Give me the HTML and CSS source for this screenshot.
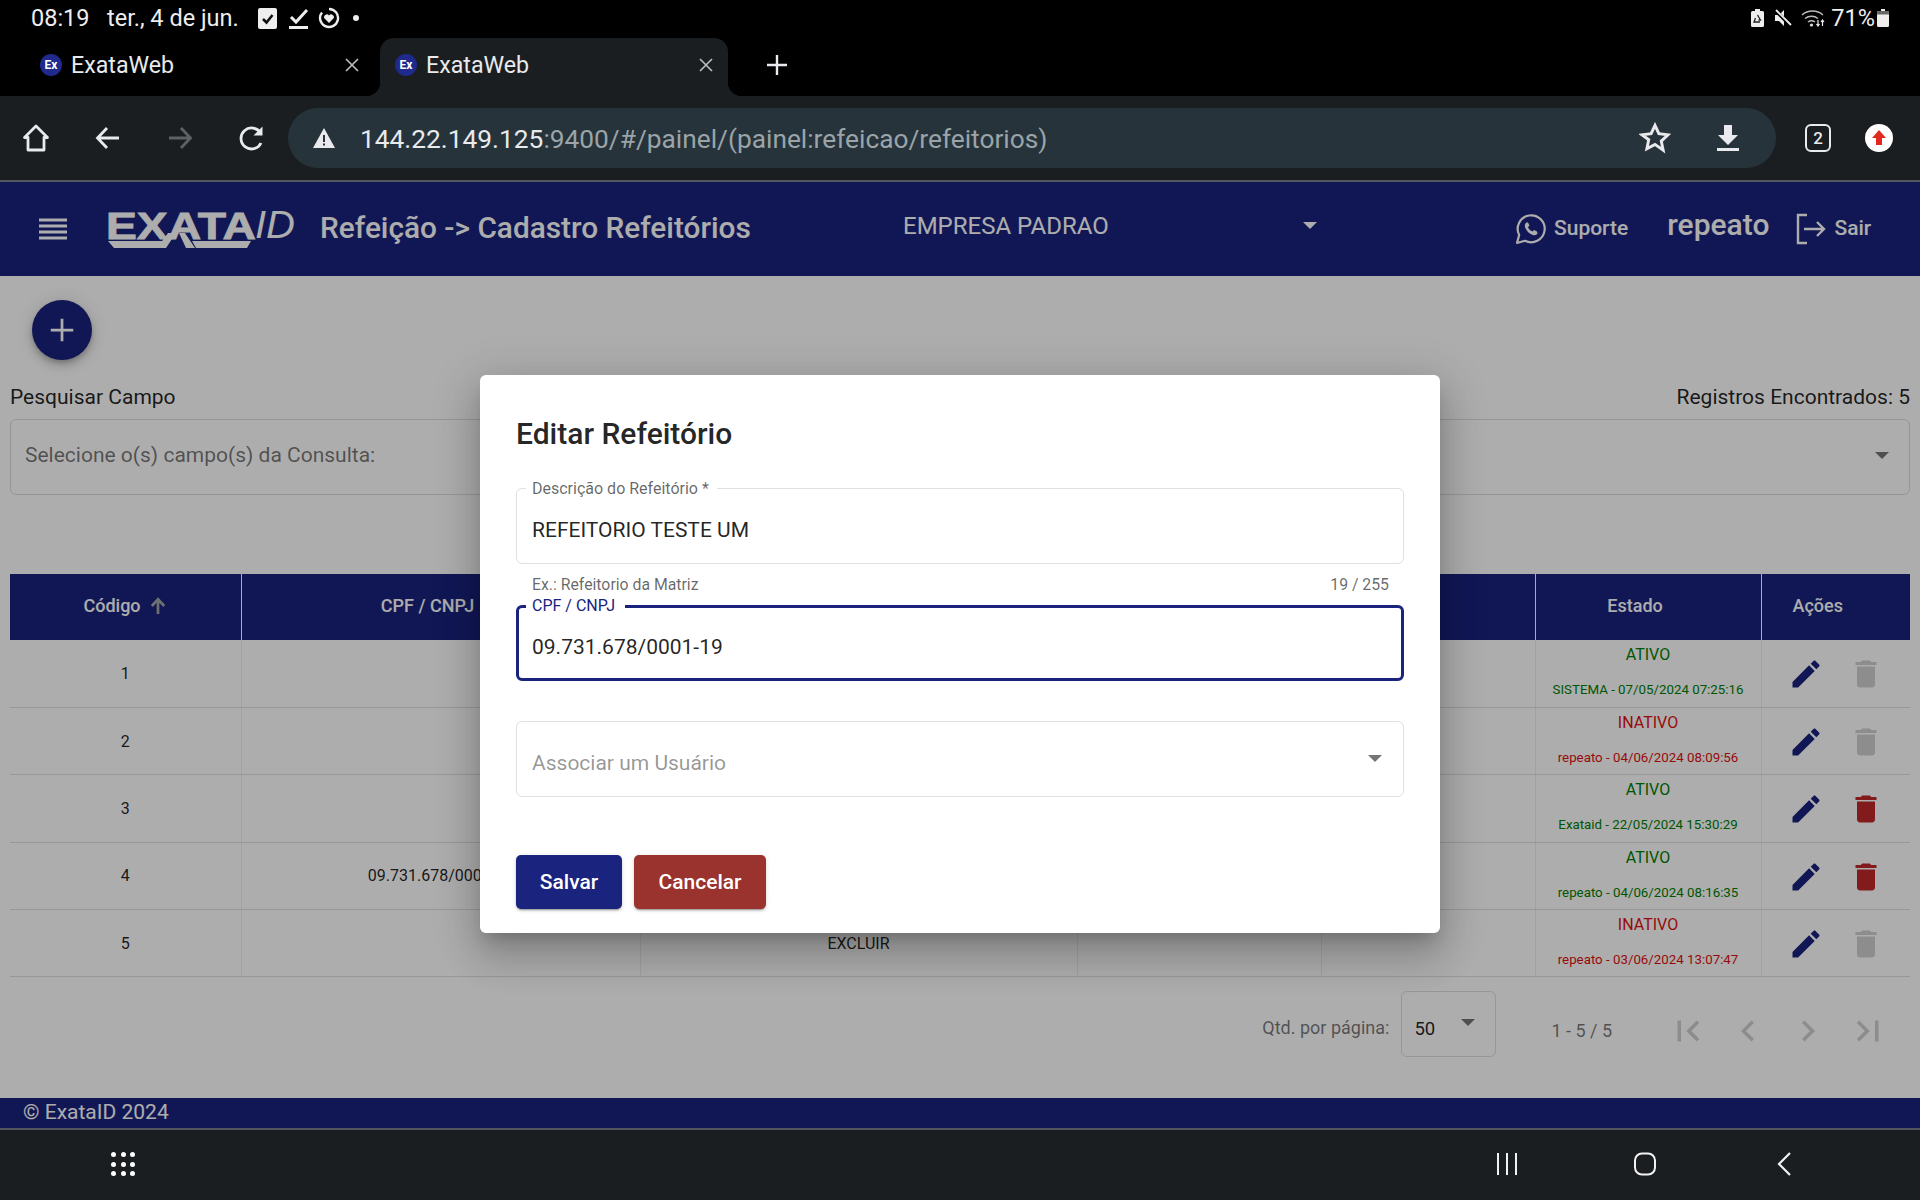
FILE: index.html
```html
<!DOCTYPE html>
<html lang="pt-BR">
<head>
<meta charset="utf-8">
<title>ExataWeb</title>
<link rel="stylesheet" href="styles.css">
</head>
<body>
<div class="screen">
  <div class="status">
    <span class="clock">08:19</span>
    <span class="date">ter., 4 de jun.</span>
    <svg class="st-check" viewBox="0 0 19 22"><rect x="0" y="1" width="19" height="21" rx="2" fill="#eee"/><path d="M5 12l3.5 3.5L14.5 8" fill="none" stroke="#111" stroke-width="2.6"/></svg>
    <svg class="st-task" viewBox="0 0 20 22"><path d="M2 10l5 5L18 3" fill="none" stroke="#eee" stroke-width="3"/><rect x="0" y="19" width="19" height="3" fill="#eee"/></svg>
    <svg class="st-heart" viewBox="0 0 22 22"><path d="M11 2a9 9 0 1 1-7 3.4" fill="none" stroke="#eee" stroke-width="2.4"/><path d="M11 16l-4.4-4.4a2.6 2.6 0 0 1 4.4-3 2.6 2.6 0 0 1 4.400 3z" fill="#eee"/></svg>
    <span class="st-dot"></span>
    <span class="spacer"></span>
    <svg class="st-batt" viewBox="0 0 13 18"><path d="M4 0h5v2h2.5a1.5 1.5 0 0 1 1.500 1.500V16.500A1.500 1.500 0 0 1 11.500 18h-10A1.500 1.500 0 0 1 0 16.500V3.500A1.500 1.500 0 0 1 1.500 2H4z" fill="#eee"/><path d="M6.5 6l3 5H7.5M4.5 9l-1.500 4h6" fill="none" stroke="#222" stroke-width="1.3"/></svg>
    <svg class="st-mute" viewBox="0 0 18 18"><path d="M1 6h4l5-5v16l-5-5H1z" fill="#eee"/><path d="M1 1l16 16" stroke="#000" stroke-width="3.5"/><path d="M2 1l15 15" stroke="#eee" stroke-width="1.8"/></svg>
    <svg class="st-wifi" viewBox="0 0 24 18"><g fill="none" stroke="#bbb" stroke-width="1.5"><path d="M1 6a16 16 0 0 1 21 0"/><path d="M4 9.500a11 11 0 0 1 13 0"/><path d="M7 13a6 6 0 0 1 7 0"/></g><circle cx="10.500" cy="16" r="1.600" fill="#ddd"/><path d="M17 11v6M15.500 15l1.500 2 1.500-2M21.500 17v-6M20 13l1.500-2 1.500 2" fill="none" stroke="#eee" stroke-width="1.2"/></svg>
    <span class="pct">71%</span>
    <svg class="st-level" viewBox="0 0 12 18"><path d="M4 0h4v2h2.500A1.500 1.500 0 0 1 12 3.500V16.500A1.500 1.500 0 0 1 10.500 18h-9A1.500 1.500 0 0 1 0 16.500V3.500A1.500 1.500 0 0 1 1.500 2H4z" fill="#eee"/><path d="M0 5.500V3.500A1.500 1.500 0 0 1 1.500 2h9A1.500 1.500 0 0 1 12 3.500v2z" fill="#666"/></svg>
  </div>

  <div class="tabs">
    <div class="tab">
      <span class="favicon">Ex</span><span class="tab-title">ExataWeb</span>
      <svg class="tab-close" viewBox="0 0 16 16"><path d="M2 2l12 12M14 2L2 14" stroke="#b8bcc0" stroke-width="1.7"/></svg>
    </div>
    <div class="tab tab-active">
      <span class="favicon">Ex</span><span class="tab-title">ExataWeb</span>
      <svg class="tab-close" viewBox="0 0 16 16"><path d="M2 2l12 12M14 2L2 14" stroke="#b8bcc0" stroke-width="1.7"/></svg>
    </div>
    <svg class="tab-new" viewBox="0 0 22 22"><path d="M11 1v20M1 11h20" stroke="#e8eaed" stroke-width="2.4"/></svg>
  </div>

  <div class="toolbar">
    <svg class="tb-icon" viewBox="0 0 28 30"><path d="M14 3L2.500 14.500H6V27h16V14.500h3.500z" fill="none" stroke="#e8eaed" stroke-width="2.8" stroke-linejoin="round"/></svg>
    <svg class="tb-icon" viewBox="0 0 28 30"><path d="M25 15H4M13 5L3.500 15 13 25" fill="none" stroke="#e8eaed" stroke-width="2.8"/></svg>
    <svg class="tb-icon" viewBox="0 0 28 30"><path d="M3 15h21M15 5l9.500 10L15 25" fill="none" stroke="#5d6165" stroke-width="2.8"/></svg>
    <svg class="tb-icon" viewBox="0 0 28 30"><path d="M23 20a10.500 10.500 0 1 1-.5-10" fill="none" stroke="#e8eaed" stroke-width="2.8"/><path d="M24.500 3.500v9h-9z" fill="#e8eaed"/></svg>
    <div class="urlbar">
      <svg class="url-warn" viewBox="0 0 24 22"><path d="M12 1L1 21h22z" fill="#e8eaed"/><path d="M11 8h2v7h-2zM11 16.500h2v2h-2z" fill="#26333a"/></svg>
      <span class="url"><span class="url-host">144.22.149.125</span>:9400/#/painel/(painel:refeicao/refeitorios)</span>
      <svg class="url-star" viewBox="0 0 24 24"><path d="M12 2.500l2.900 6.300 6.900.8-5.100 4.700 1.400 6.800L12 16.800l-6.100 3.300 1.400-6.800L2.200 9.600l6.900-.8z" fill="none" stroke="#e8eaed" stroke-width="2.2" stroke-linejoin="miter"/></svg>
      <svg class="url-down" viewBox="0 0 24 28"><path d="M8 1h8v10h6L12 21 2 11h6z" fill="#e8eaed"/><rect x="1" y="24" width="22" height="3" fill="#e8eaed"/></svg>
    </div>
    <span class="tab-count">2</span>
    <svg class="upd" viewBox="0 0 28 28"><circle cx="14" cy="14" r="14" fill="#fff"/><path d="M14 6l7 8h-4v7h-6v-7H7z" fill="#e0291f"/></svg>
  </div>

  <div class="app">
    <header class="app-header">
      <svg class="menu" viewBox="0 0 28 22"><path d="M0 2h28M0 8h28M0 14h28M0 20h28" stroke="#fff" stroke-width="3"/></svg>
      <svg class="logo" viewBox="0 -8 190 52">
        <text class="logo-exata" x="0" y="28" textLength="150" lengthAdjust="spacingAndGlyphs">EXATA</text>
        <text class="logo-id" x="149" y="27" textLength="40" lengthAdjust="spacingAndGlyphs">ID</text>
        <path d="M2 30h55l-4 7H8zM86 30h59l-4 7H90zM62 22h8l-10 15h-9zM73 22h6l10 15h-9z" fill="#fff"/>
      </svg>
      <span class="page-title">Refeição -&gt; Cadastro Refeitórios</span>
      <div class="company"><span>EMPRESA PADRAO</span><span class="caret caret-light"></span></div>
      <svg class="wa" viewBox="0 0 32 32"><path d="M2 30l2.200-8A13.500 13.500 0 1 1 10 27.800z" fill="none" stroke="#fff" stroke-width="2.2" stroke-linejoin="round"/><path d="M11.500 9.500c-1.500 1-2 2.500-1.500 4.500 1 3.500 4.500 7 8 8 2 .5 3.500 0 4.500-1.500l-.5-2-3-1.500-1.500 1.500c-2-.5-4-2.500-4.500-4.500l1.500-1.500-1.500-3z" fill="#fff"/></svg>
      <span class="hd-link">Suporte</span>
      <span class="user">repeato</span>
      <svg class="logout" viewBox="0 0 32 32"><path d="M12 2H3v28h9" fill="none" stroke="#fff" stroke-width="2.4"/><path d="M9 16h20M22 9l7 7-7 7" fill="none" stroke="#fff" stroke-width="2.4"/></svg>
      <span class="hd-link">Sair</span>
    </header>

    <main class="content">
      <button class="fab" type="button"><svg viewBox="0 0 24 24"><path d="M12 3v18M3 12h18" stroke="#fff" stroke-width="2.2"/></svg></button>
      <div class="search-head"><span>Pesquisar Campo</span><span>Registros Encontrados: 5</span></div>
      <div class="search-box"><span>Selecione o(s) campo(s) da Consulta:</span><span class="caret caret-grey"></span></div>

      <table class="grid">
        <colgroup><col class="c1"><col class="c2"><col class="c3"><col class="c4"><col class="c5"><col class="c6"><col class="c7"></colgroup>
        <thead>
          <tr><th class="th-first">Código <svg class="sort" viewBox="0 0 16 16"><path d="M8 15V3M2.500 8L8 2l5.500 6" fill="none" stroke="#a1a8a5" stroke-width="2.4"/></svg></th><th>CPF / CNPJ</th><th></th><th></th><th></th><th>Estado</th><th class="th-last">Ações</th></tr>
        </thead>
        <tbody>
          <tr><td>1</td><td></td><td></td><td></td><td></td>
            <td class="state on"><div>ATIVO</div><small>SISTEMA - 07/05/2024 07:25:16</small></td>
            <td><div class="acts"><svg class="ico ico-edit" viewBox="0 0 24 24"><path d="M3 17.250V21h3.750L17.810 9.940l-3.750-3.750L3 17.250zM20.710 7.040c.39-.39.39-1.020 0-1.410l-2.340-2.340c-.39-.39-1.020-.39-1.410 0l-1.830 1.830 3.750 3.750 1.830-1.830z"/></svg><svg class="ico ico-off" viewBox="0 0 24 24"><path d="M6 19c0 1.100.9 2 2 2h8c1.100 0 2-.9 2-2V7H6v12zM19 4h-3.500l-1-1h-5l-1 1H5v2h14V4z"/></svg></div></td></tr>
          <tr><td>2</td><td></td><td></td><td></td><td></td>
            <td class="state off"><div>INATIVO</div><small>repeato - 04/06/2024 08:09:56</small></td>
            <td><div class="acts"><svg class="ico ico-edit" viewBox="0 0 24 24"><path d="M3 17.250V21h3.750L17.810 9.940l-3.750-3.750L3 17.250zM20.710 7.040c.39-.39.39-1.020 0-1.410l-2.340-2.340c-.39-.39-1.020-.39-1.410 0l-1.830 1.830 3.750 3.750 1.830-1.830z"/></svg><svg class="ico ico-off" viewBox="0 0 24 24"><path d="M6 19c0 1.100.9 2 2 2h8c1.100 0 2-.9 2-2V7H6v12zM19 4h-3.500l-1-1h-5l-1 1H5v2h14V4z"/></svg></div></td></tr>
          <tr><td>3</td><td></td><td></td><td></td><td></td>
            <td class="state on"><div>ATIVO</div><small>Exataid - 22/05/2024 15:30:29</small></td>
            <td><div class="acts"><svg class="ico ico-edit" viewBox="0 0 24 24"><path d="M3 17.250V21h3.750L17.810 9.940l-3.750-3.750L3 17.250zM20.710 7.040c.39-.39.39-1.020 0-1.410l-2.340-2.340c-.39-.39-1.020-.39-1.410 0l-1.830 1.830 3.750 3.750 1.830-1.830z"/></svg><svg class="ico ico-del" viewBox="0 0 24 24"><path d="M6 19c0 1.100.9 2 2 2h8c1.100 0 2-.9 2-2V7H6v12zM19 4h-3.500l-1-1h-5l-1 1H5v2h14V4z"/></svg></div></td></tr>
          <tr><td>4</td><td>09.731.678/0001-19</td><td></td><td></td><td></td>
            <td class="state on"><div>ATIVO</div><small>repeato - 04/06/2024 08:16:35</small></td>
            <td><div class="acts"><svg class="ico ico-edit" viewBox="0 0 24 24"><path d="M3 17.250V21h3.750L17.810 9.940l-3.750-3.750L3 17.250zM20.710 7.040c.39-.39.39-1.020 0-1.410l-2.340-2.340c-.39-.39-1.020-.39-1.410 0l-1.830 1.830 3.750 3.750 1.830-1.830z"/></svg><svg class="ico ico-del" viewBox="0 0 24 24"><path d="M6 19c0 1.100.9 2 2 2h8c1.100 0 2-.9 2-2V7H6v12zM19 4h-3.500l-1-1h-5l-1 1H5v2h14V4z"/></svg></div></td></tr>
          <tr><td>5</td><td></td><td>EXCLUIR</td><td></td><td></td>
            <td class="state off"><div>INATIVO</div><small>repeato - 03/06/2024 13:07:47</small></td>
            <td><div class="acts"><svg class="ico ico-edit" viewBox="0 0 24 24"><path d="M3 17.250V21h3.750L17.810 9.940l-3.750-3.750L3 17.250zM20.710 7.040c.39-.39.39-1.020 0-1.410l-2.340-2.340c-.39-.39-1.020-.39-1.410 0l-1.830 1.830 3.750 3.750 1.830-1.830z"/></svg><svg class="ico ico-off" viewBox="0 0 24 24"><path d="M6 19c0 1.100.9 2 2 2h8c1.100 0 2-.9 2-2V7H6v12zM19 4h-3.500l-1-1h-5l-1 1H5v2h14V4z"/></svg></div></td></tr>
        </tbody>
      </table>

      <div class="pager">
        <span class="pg-label">Qtd. por página:</span>
        <div class="pg-size"><span>50</span><span class="caret caret-grey"></span></div>
        <span class="pg-range">1 - 5 / 5</span>
        <svg class="pg-btn" viewBox="0 0 24 24"><path d="M18.410 16.590L13.820 12l4.590-4.590L17 6l-6 6 6 6zM6 6h2v12H6z"/></svg>
        <svg class="pg-btn" viewBox="0 0 24 24"><path d="M15.410 7.410L14 6l-6 6 6 6 1.410-1.410L10.830 12z"/></svg>
        <svg class="pg-btn" viewBox="0 0 24 24"><path d="M10 6L8.590 7.410 13.170 12l-4.580 4.590L10 18l6-6z"/></svg>
        <svg class="pg-btn" viewBox="0 0 24 24"><path d="M5.590 7.410L10.180 12l-4.590 4.590L7 18l6-6-6-6zM16 6h2v12h-2z"/></svg>
      </div>
    </main>

    <footer class="app-footer">© ExataID 2024</footer>

    <div class="overlay">
      <section class="modal">
        <h2 class="modal-title">Editar Refeitório</h2>
        <div class="field"><label>Descrição do Refeitório *</label><span class="value">REFEITORIO TESTE UM</span></div>
        <div class="hint"><span>Ex.: Refeitorio da Matriz</span><span>19 / 255</span></div>
        <div class="field field-focus"><label>CPF / CNPJ</label><span class="value">09.731.678/0001-19</span></div>
        <div class="field field-select"><span class="value placeholder">Associar um Usuário</span><span class="caret caret-grey"></span></div>
        <div class="modal-actions"><button class="btn btn-save" type="button">Salvar</button><button class="btn btn-cancel" type="button">Cancelar</button></div>
      </section>
    </div>
  </div>

  <div class="navbar">
    <div class="nav-apps"><i></i><i></i><i></i><i></i><i></i><i></i><i></i><i></i><i></i></div>
    <span class="spacer"></span>
    <svg class="nav-ico nav-recent" viewBox="0 0 24 24"><path d="M3 1v22M12 1v22M21 1v22" stroke="#f2f2f2" stroke-width="2"/></svg>
    <svg class="nav-ico nav-home" viewBox="0 0 24 24"><rect x="2" y="1.500" width="20" height="21" rx="7" fill="none" stroke="#f2f2f2" stroke-width="2"/></svg>
    <svg class="nav-ico nav-back" viewBox="0 0 24 24"><path d="M18 1L7 12l11 11" fill="none" stroke="#f2f2f2" stroke-width="2.2"/></svg>
  </div>
</div>
</body>
</html>
```
FILE: styles.css
```css
* { box-sizing: border-box; }
html, body { margin: 0; padding: 0; }
body { font-family: Roboto, "Liberation Sans", sans-serif; background: #000; }
.screen { width: 1920px; height: 1200px; display: flex; flex-direction: column; overflow: hidden; background: #000; }
.spacer { flex: 1; }

/* status bar */
.status { height: 38px; flex: none; display: flex; align-items: center; color: #eee; font-size: 23.5px; padding: 0 31px 2px 31px; }
.clock { width: 76px; }
.date { width: 151px; }
.st-check { width: 19px; height: 22px; }
.st-task { width: 20px; height: 22px; margin-left: 12px; }
.st-heart { width: 22px; height: 22px; margin-left: 9px; }
.st-dot { width: 6px; height: 6px; border-radius: 50%; background: #eee; margin-left: 13px; }
.st-batt { width: 13px; height: 18px; }
.st-mute { width: 18px; height: 18px; margin-left: 10px; }
.st-wifi { width: 24px; height: 18px; margin-left: 9px; }
.pct { margin-left: 6px; }
.st-level { width: 12px; height: 18px; margin-left: 2px; }

/* tabs */
.tabs { height: 58px; flex: none; display: flex; align-items: center; background: #000; }
.tab { width: 380px; height: 58px; display: flex; align-items: center; padding: 0 20px 4px 40px; color: #e8eaed; }
.tab-active { position: relative; width: 348px; padding: 0 14px 4px 15px; background: #1b1e20; border-radius: 14px 14px 0 0; }
.tab-active::before, .tab-active::after { content: ""; position: absolute; bottom: 0; width: 14px; height: 14px; }
.tab-active::before { left: -14px; background: radial-gradient(circle at 0 0, #000 14px, #1b1e20 14.5px); }
.tab-active::after { right: -14px; background: radial-gradient(circle at 100% 0, #000 14px, #1b1e20 14.5px); }
.favicon { width: 22px; height: 22px; border-radius: 50%; background: #1f2a8c; color: #fff; font-size: 12px; font-weight: 700; display: flex; align-items: center; justify-content: center; flex: none; }
.tab-title { flex: 1; font-size: 23.2px; margin-left: 9px; }
.tab-close { width: 16px; height: 16px; }
.tab-new { width: 22px; height: 22px; margin: -4px 0 0 38px; }

/* toolbar */
.toolbar { height: 84px; flex: none; background: #1b1e20; display: flex; align-items: center; padding: 0 0 0 22px; }
.tb-icon { width: 28px; height: 30px; flex: none; margin-right: 44px; }
.toolbar .tb-icon:nth-of-type(4) { margin-right: 22px; }
.urlbar { width: 1488px; height: 60px; border-radius: 30px; background: #26333a; display: flex; align-items: center; padding: 0 36px 0 24px; flex: none; }
.url-warn { width: 24px; height: 22px; flex: none; }
.url { flex: 1; margin: 2px 0 0 24px; font-size: 26.3px; color: #9aa4a9; white-space: nowrap; }
.url-host { color: #e8eaed; }
.url-star { width: 32px; height: 32px; margin-right: -1px; }
.url-down { width: 24px; height: 28px; margin-left: 46px; }
.tab-count { width: 26px; height: 28px; margin-left: 29px; border: 2.5px solid #e8eaed; border-radius: 6px; color: #e8eaed; font-size: 17px; font-weight: 500; display: flex; align-items: center; justify-content: center; }
.upd { width: 28px; height: 28px; margin-left: 34px; }

/* application */
.app { position: relative; flex: 1; display: flex; flex-direction: column; background: #fff; border-top: 2px solid #7a7f8c; border-bottom: 2px solid #7a7f8c; }
.app-header { height: 94px; flex: none; background: #1a237e; display: flex; align-items: center; color: #fff; padding: 0 0 1px 39px; }
.menu { width: 28px; height: 22px; flex: none; }
.logo { width: 190px; height: 52px; margin-left: 39px; flex: none; }
.logo-exata { font-family: "Liberation Sans", sans-serif; font-weight: 700; font-size: 37px; fill: #fff; stroke: #fff; stroke-width: .8px; }
.logo-id { font-family: "Liberation Sans", sans-serif; font-style: italic; font-size: 38px; fill: #fff; }
.page-title { margin: -3px 0 0 24px; font-size: 29.8px; font-weight: 500; width: 583px; white-space: nowrap; }
.company { width: 414px; display: flex; align-items: center; justify-content: space-between; font-size: 24px; margin-top: -6px; }
.caret { width: 0; height: 0; border-left: 7px solid transparent; border-right: 7px solid transparent; }
.caret-light { border-top: 7px solid #fff; }
.caret-grey { border-top: 7px solid rgba(0, 0, 0, .54); }
.wa { width: 32px; height: 32px; margin-left: 198px; }
.hd-link { font-size: 21px; font-weight: 500; margin: -1px 0 0 7px; }
.user { font-size: 30px; font-weight: 500; margin: -8px 0 0 39px; }
.logout { width: 32px; height: 32px; margin-left: 26px; }

.content { flex: 1; padding: 24px 10px 0; display: flex; flex-direction: column; color: rgba(0, 0, 0, .87); }
.fab { width: 60px; height: 60px; margin-left: 22px; padding: 0; border: 0; border-radius: 50%; background: #1a237e; box-shadow: 0 3px 5px -1px rgba(0,0,0,.2), 0 6px 10px rgba(0,0,0,.14), 0 1px 18px rgba(0,0,0,.12); display: flex; align-items: center; justify-content: center; flex: none; }
.fab svg { width: 30px; height: 30px; }
.search-head { display: flex; justify-content: space-between; font-size: 21px; line-height: 24px; margin-top: 25px; }
.search-box { height: 76px; margin-top: 10px; border: 1px solid #ddd; border-radius: 6px; display: flex; align-items: center; justify-content: space-between; padding: 0 20px 4px 14px; font-size: 21px; color: rgba(0, 0, 0, .54); flex: none; }
.grid { width: 1900px; margin-top: 79px; border-collapse: collapse; table-layout: fixed; font-size: 16px; }
.c1 { width: 231px; } .c2 { width: 399px; } .c3 { width: 437px; } .c4 { width: 244px; } .c5 { width: 214px; } .c6 { width: 226px; } .c7 { width: 149px; }
.grid th { height: 66px; background: #1a237e; color: #fff; font-size: 18px; font-weight: 500; text-align: center; padding: 0 26px 3px 0; border-right: 1px solid #fff; }
.grid th.th-first { padding-right: 0; }
.grid th.th-last { padding-right: 36px; border-right: 0; }
.grid th:nth-child(3), .grid th:nth-child(4) { border-right: 0; }
.grid td { height: 67.4px; padding: 0; text-align: center; border-bottom: 1px solid #e0e0e0; border-right: 1px solid #eee; color: rgba(0, 0, 0, .87); }
.grid td:last-child { border-right: 0; }
.sort { width: 18px; height: 18px; vertical-align: -3px; margin-left: 4px; }
.state { line-height: 1; }
.state div { font-size: 16px; margin-bottom: 20px; margin-top: -11px; }
.state small { font-size: 13.3px; display: block; margin-bottom: -8px; }
.on { color: #008000 !important; }
.off { color: #e01010 !important; }
.acts { display: flex; justify-content: center; gap: 24px; padding-top: 2px; }
.ico { width: 36px; height: 36px; display: block; }
.ico-edit { fill: #1a237e; }
.ico-off { fill: #d0d0d0; }
.ico-del { fill: #c0282a; }
.pager { display: flex; align-items: center; height: 66px; margin-top: 14px; justify-content: flex-end; padding-right: 12px; color: rgba(0, 0, 0, .54); font-size: 18px; }
.pg-label { margin-top: 6px; }
.pg-size { width: 95px; height: 66px; margin-left: 12px; border: 1px solid #ddd; border-radius: 6px; display: flex; justify-content: space-between; padding: 26px 20px 0 12px; color: rgba(0, 0, 0, .87); font-size: 18.5px; }
.pg-size .caret { margin-top: 1px; }
.pg-range { margin-left: 55px; margin-right: 46px; margin-top: 12px; font-size: 18px; }
.pg-btn { width: 60px; height: 42px; fill: #cfcfcf; margin-top: 14px; flex: none; }
.app-footer { height: 30px; flex: none; margin-top: auto; background: #1a237e; color: #fff; font-size: 21px; line-height: 28px; padding-left: 23px; }

/* dialog */
.overlay { position: absolute; inset: -2px 0; background: rgba(0, 0, 0, .32); display: flex; align-items: center; justify-content: center; padding-bottom: 2px; }
.modal { width: 960px; background: #fff; border-radius: 6px; padding: 38px 36px 24px; box-shadow: 0 11px 15px -7px rgba(0,0,0,.2), 0 24px 38px 3px rgba(0,0,0,.14), 0 9px 46px 8px rgba(0,0,0,.12); }
.modal-title { margin: 0 0 33px; font-size: 30px; font-weight: 500; line-height: 42px; color: rgba(0, 0, 0, .87); }
.field { position: relative; height: 76px; border: 1px solid #e0e0e0; border-radius: 6px; padding: 26px 15px 0; }
.field label { position: absolute; left: 9px; top: -9px; padding: 0 8px 0 6px; background: #fff; font-size: 16px; line-height: 18px; color: rgba(0, 0, 0, .6); }
.value { font-size: 21px; line-height: 30px; color: rgba(0, 0, 0, .87); }
.hint { display: flex; justify-content: space-between; padding: 11px 15px 0 16px; height: 41px; font-size: 15.8px; line-height: 20px; color: rgba(0, 0, 0, .6); }
.field-focus { border: 3px solid #1a237e; padding: 24px 13px 0; }
.field-focus label { left: 7px; top: -11px; color: #1a237e; padding-right: 10px; }
.field-select { margin-top: 40px; display: flex; justify-content: space-between; align-items: center; padding: 8px 21px 0 15px; }
.field-select .caret { margin-top: -10px; }
.value.placeholder { color: rgba(0, 0, 0, .42); }
.modal-actions { display: flex; gap: 12px; margin-top: 58px; }
.btn { height: 54px; border: 0; border-radius: 5px; color: #fff; font-family: inherit; font-size: 21px; font-weight: 500; box-shadow: 0 3px 1px -2px rgba(0,0,0,.2), 0 2px 2px rgba(0,0,0,.14), 0 1px 5px rgba(0,0,0,.12); padding: 0; }
.btn-save { width: 106px; background: #1a237e; }
.btn-cancel { width: 132px; background: #9a322d; }

/* navigation bar */
.navbar { height: 70px; flex: none; background: #1b1e20; display: flex; align-items: center; padding-left: 111px; padding-right: 124px; padding-bottom: 2px; }
.nav-apps { display: grid; grid-template-columns: repeat(3, 5px); gap: 4.5px; }
.nav-apps i { width: 5px; height: 5px; border-radius: 50%; background: #fff; }
.nav-ico { width: 24px; height: 24px; }
.nav-home { margin-left: 114px; }
.nav-back { margin-left: 115px; }
```
